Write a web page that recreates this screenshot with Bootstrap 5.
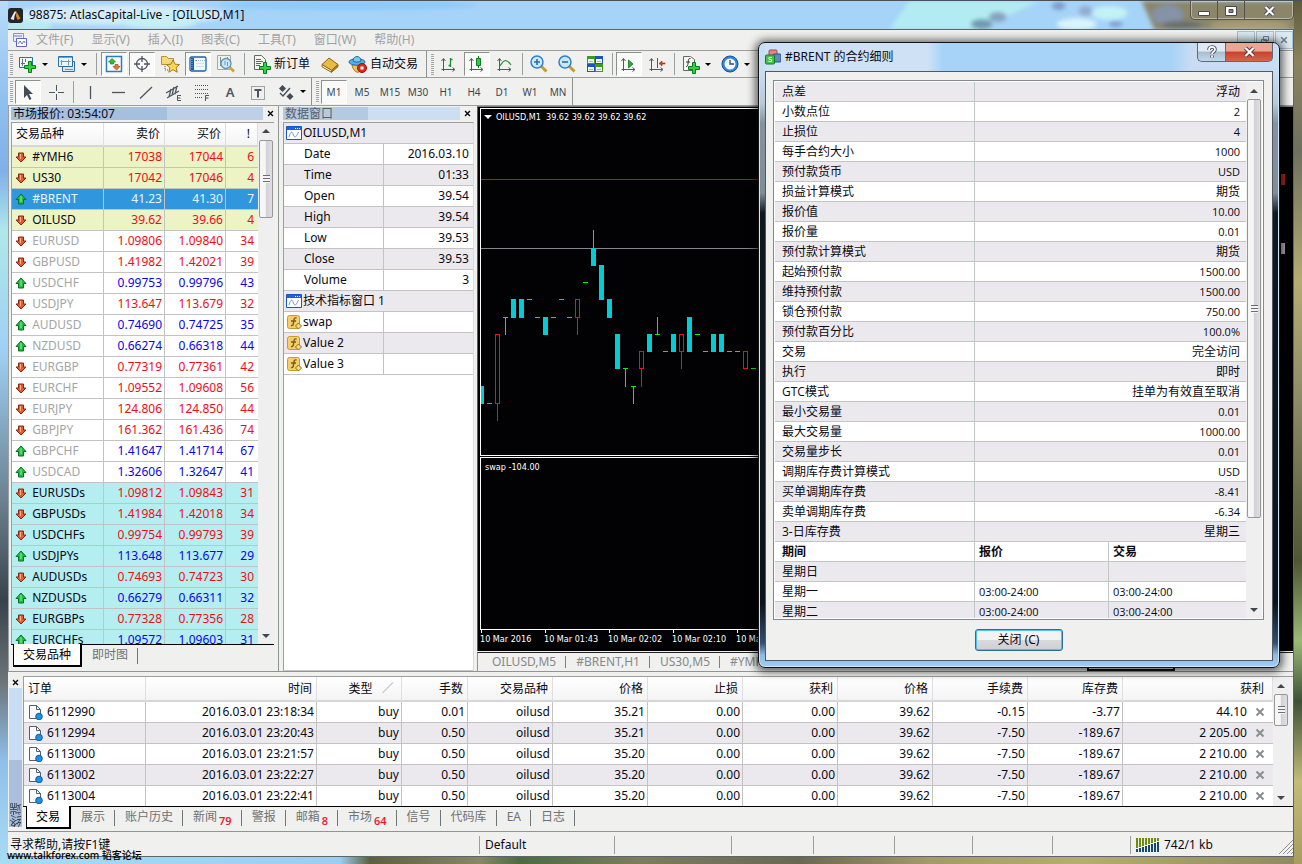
<!DOCTYPE html>
<html lang="zh-CN">
<head>
<meta charset="utf-8">
<meta name="viewport" content="width=device-width, initial-scale=1">
<title>98875: AtlasCapital-Live - [OILUSD,M1]</title>
<link href="https://cdn.jsdelivr.net/npm/bootstrap@5.3.0/dist/css/bootstrap.min.css" rel="stylesheet">
<style>
:root{--face:#f0f0ef;--line:#c3c3c3;--edge:#8f9594;--alt:#ebe9ed}
body{font:12px/16px "Noto Sans","Noto Sans CJK SC",sans-serif;color:#0a0a14;overflow:hidden}
button{font:inherit;color:inherit;background:none;border:0;padding:0}
.app-window{padding:0 8px 7px;border-top:1px solid #4c5058;
 background:
 linear-gradient(#5f5c3c 0,#8b8360 60px,#6f7060 150px,#b5ab74 280px,#8d8a68 400px,#4f5636 560px,#9cb878 640px,#3d5138 700px,#c2bb7a 780px,#a89c60) right/8px 100% no-repeat,
 linear-gradient(#b8dcf8,#8fc0ee 100px,#7fb0e8 170px,#aee8ea 230px,#9fd0f4 350px,#6b8090 500px,#39424c 600px,#6c7478 680px,#90bfea 760px,#a8dcf4) left/8px 100% no-repeat,
 linear-gradient(90deg,#a4dcf6 0,#9ccdf0 340px,#5d6040 370px,#8a8668 480px,#4d6a44 520px,#7d7c62 640px,#6b6852 800px,#a49a6a 930px,#b5ad70 1080px,#8f8960)}
.title-bar{height:28px;background:#a6d3f8}
.title-bar .scene{inset:0;width:100%;height:100%}
.app-name{margin-left:6px}
.client{background:var(--face);border:1px solid #5b6668;border-width:1px 1px 1px 0}
.win-btns{border:1px solid #56544a;border-top:0;border-radius:0 0 5px 5px;height:19px;box-shadow:inset 0 0 0 1px #fff6}
.win-btns button{width:27px;border-right:1px solid #56544a}
.win-btns button:last-child{width:48px;border-right:0}
.menu-row{height:21px;border-bottom:1px solid #9a9f9e}
.menu-row a{padding:0 10px 0 8px;color:#a2a2a2;text-decoration:none}
.mdi-btns button{width:18px;height:18px;border:1px solid #a8bfd0;background:#dbe9f3;margin-left:1px}
.tools-row{height:27px;border-bottom:1px solid #9a9f9e}
.tools-row.low{height:28px}
.grip{width:3px;height:21px;margin:0 1px 0 2px;background:repeating-linear-gradient(#a5a7a7 0 1px,#f0f0ef 1px 2px)}
.row-end + .grip{margin-left:4px}
.tool{width:28px;height:24px;display:flex;align-items:center;justify-content:center;flex:none}
.tool svg{width:20px;height:20px;flex:none}
.tool.on{width:26px;margin:0 1px;border:1px solid #8d9190;border-right-color:#fff;border-bottom-color:#fff;background:#f9f9f8}
.tool.frame{font-size:10px;color:#3c4650}
.tool.letter{font-size:13px;font-weight:600;color:#4c5661}
.wide-tool{display:flex;align-items:center;height:24px}
.wide-tool svg{width:20px;height:20px;margin:0 2px 0 4px}
.wide-tool + .tool{margin-left:6px}
.drop{width:11px;height:24px;display:flex;align-items:center}
.drop::before{content:"";border:3px solid transparent;border-top-color:#000;border-bottom:0}
.sep8,.sep6{width:8px;height:22px;flex:none;background:linear-gradient(#9a9f9e,#9a9f9e) center/1px 100% no-repeat}
.sep6{width:6px}
.row-end{width:1px;align-self:stretch;background:#8d9190}
.pane-head{height:15px;line-height:13px}
.pane-head .cap{height:13px;flex:1;padding-left:2px;background:linear-gradient(90deg,#a5bfdf 62%,#bdd0e8 62%)}
.pane-head .cap.idle{color:#56606c;background:linear-gradient(90deg,#b4cae2 48%,#cbdef2 48%)}
.x-btn{width:14px;height:12px;display:flex;align-items:center;justify-content:center}
.grid-table{border-collapse:separate;border-spacing:0;table-layout:fixed;width:100%;line-height:20px;white-space:nowrap}
.grid-table td{height:21px;padding:0 2px 0 0;background:#fff;border-bottom:1px solid var(--line);border-right:1px solid var(--line);overflow:hidden}
.grid-table td:last-child{border-right:0}
.grid-table th{height:25px;font-weight:400;padding:0 4px 0 0;background:linear-gradient(#fff,#f4f4f5);border-right:1px solid #dedfe2;border-bottom:2px solid #d6d6d8}
.grid-table svg{width:16px;height:16px;vertical-align:-4px}
.watch{width:270px;padding:1px 1px 4px 2px;border-left:1px solid #9aa09f}
.watch-frame{border-top:1px solid #9a9f9e;border-left:1px solid #9a9f9e}
.watch-frame,.watch .tab-strip{margin-right:3px}
.watch .tab-strip{padding-left:2px}
.watch .grid-table th{height:24px}
.watch td:first-child{padding-left:1px}
.watch td:last-child{padding-right:4px}
.watch th:last-child{padding-right:7px}
.watch .hot td{background:#ecf3c4}
.watch .picked td{background:#3096de;color:#e9f6ff}
.watch .minor td{background:#b4eef0}
.faint{color:#a4a6a6}
.up-num{color:#0a04ee}.down-num{color:#f00c16}
.picked .up-num{color:#e9f6ff}
.data-pane{width:196px;padding:1px 0 0 4px;border-left:1px solid #8f9594}
.data-frame{border:1px solid #9a9f9e;border-right-color:#dcdcdc;border-bottom-color:#c8c8c8;background:#fff}
.data-frame td{padding-right:4px}
.data-frame tr:nth-child(odd) td,.orders tbody tr:nth-child(even) td{background:var(--alt)}
.data-frame .name-cell{padding-left:20px}
.data-frame .icon-cell{padding-left:2px}
.data-frame svg{margin-right:1px}
.scroller{width:16px;background:#efefef;display:flex;flex-direction:column;align-items:center;flex:none}
.scroller i{height:17px;display:flex;align-items:center;flex:none}
.scroller i::before{content:"";border:4px solid transparent;border-bottom-color:#40484c;border-top:0}
.scroller i:last-child::before{border:4px solid transparent;border-top-color:#40484c;border-bottom:0}
.thumb{width:14px;border:1px solid #979797;border-radius:2px;background:linear-gradient(90deg,#f6f6f6 45%,#d0d0d6 50%,#dfdfe3);display:flex;align-items:center;justify-content:center}
.thumb::after{content:"";width:7px;height:8px;background:repeating-linear-gradient(#6a6e72 0 1px,#f4f4f4 1px 3px)}
.tab-strip{border-top:1px solid #000;color:#6f7272;height:23px}
.tab-strip button{padding:0 10px;position:relative;height:20px;line-height:20px}
.tab-strip button:not(.current)::after{content:"";position:absolute;right:0;top:3px;bottom:1px;width:1px;background:#6f7678}
.tab-strip .current{background:#fff;color:#000;border:solid #000;border-width:0 2px 2px 1px;height:23px;margin-top:-1px;padding:0 9px}
.tab-strip sub{color:#f01c30;font-weight:600;font-size:11px;bottom:-4px;line-height:10px;margin-left:2px}
.chart{background:#020204;padding:1px 46px 0 2px;border-left:1px solid #555c5c;border-top:1px solid #777c7c;color:#fff;font:9px/12px "DejaVu Sans Condensed","DejaVu Sans",sans-serif}
.pane-a{border:1px solid #fff;border-right:0;margin-bottom:1px}
.pane-b{border:1px solid #fff;border-right:0;height:173px;padding:3px 0 0 4px}
.pane-a svg{width:100%;height:100%;display:block;overflow:visible}
.axis{height:21px}
.axis span{width:64px;flex:none;position:relative;padding-top:3px;white-space:nowrap}
.axis span::before{content:"";position:absolute;left:1px;top:0;height:3px;width:1px;background:#fff}
.chart-tabs{height:19px;border-top:1px solid #222;margin-top:1px;color:#858888;border-left:1px solid #8f9594}
.chart-tabs button{padding:0 10px;line-height:18px;position:relative}
.chart-tabs button::after{content:"";position:absolute;right:0;top:3px;bottom:3px;width:1px;background:#7b8082}
.active-edge{width:88px;height:18px;border:solid #111;border-width:0 2px 2px;margin-right:118px;background:#fff}
.bottom-pane{height:161px;border-top:1px solid #8f9594;border-bottom:1px solid #8f9594;padding-top:4px}
.side-strip{width:15px;padding-right:1px}
.side-cap{width:13px;background:linear-gradient(#a9bfdc 48%,#c8def5 48%);writing-mode:vertical-rl;transform:rotate(180deg);line-height:13px;color:#333c48;font-family:"Noto Sans CJK SC",sans-serif}
.orders-frame{border-top:1px solid #9a9f9e;border-left:1px solid #9a9f9e;height:130px;padding-right:4px}
.orders td:first-child{padding-left:3px}
.orders td:first-child svg{margin-right:4px}
.orders .kill{width:10px;height:10px;vertical-align:-1px;margin-left:5px;color:#8b8e90}
.status-row{height:24px;line-height:25px}
.status-row .hint{padding-left:2px}
.status-row .cellbox{border-left:1px solid #9a9f9e;height:18px;margin-top:4px;line-height:18px;padding-left:5px;flex:none}
.watermark{left:7px;bottom:2px;font:500 10px/14px "Noto Sans","Noto Sans CJK SC",sans-serif;color:#000}
.spec-dialog{right:22px;top:41px;width:522px;height:626px;border:1px solid #101418;border-radius:7px;padding:0 6px 6px;
 box-shadow:inset 0 0 0 1px #cfe6f8,0 1px 9px 3px #0009;
 background:linear-gradient(#c9def3 0,#c9def3 28px,#b9cbd8 60px,#8593a0 80px,#7f8d99 150px,#10181e 170px,#0c1319 560px,#34506e 600px,#8fb9e4 612px,#a2cdf4)}
.spec-title{height:28px;background:linear-gradient(90deg,#cfe1f4 0 16%,#cfe1f4 32%,#a7d3f8 35% 80%,#c8dcf3 84%)}
.help-btn,.shut-btn{height:19px;border:1px solid #5c6a78;border-top:0;background:linear-gradient(#dfe9f3 45%,#a9bdd2 50%,#c3d8ea)}
.help-btn{width:28px;border-radius:0 0 0 5px;border-right:0}
.shut-btn{width:48px;border-radius:0 0 5px 0;background:linear-gradient(#e9a596 45%,#c8412e 50%,#d4664c)}
.spec-body{background:var(--face);border:1px solid #4d5a64;padding:8px 8px 9px 7px}
.spec-list{border:1px solid #828a90;height:540px;background:#fff;padding:1px;font:11px/19px "Open Sans","Noto Sans CJK SC",sans-serif}
.spec-list table{line-height:19px}
.spec-list td{height:20px;padding:0 6px 0 7px;border-color:#c3c6c6}
.spec-list td ~ td{padding-left:4px}
.spec-list tr:nth-child(odd) td{background:var(--alt)}
.spec-list .han{font-size:12px}
.ok-btn{width:88px;height:22px;margin-top:9px;border:1px solid #2d6c9c;border-radius:3px;box-shadow:inset 0 0 0 1px #4dc2f2;background:linear-gradient(#f3f3f3 48%,#dadadc 50%,#cfcfd4)}
</style>
</head>
<body>
<svg width="0" height="0" class="position-absolute" aria-hidden="true">
 <symbol id="i-up" viewBox="0 0 16 16"><path d="M8 3l5 5.500h-2.500v4.500h-5V8.500H3z" fill="#1fbf3c" stroke="#0b6e2a"/><path d="M8 5v6" stroke="#8af29a"/></symbol>
 <symbol id="i-down" viewBox="0 0 16 16"><path d="M8 13l5-5h-2.500V4h-5v4H3z" fill="#f0552c" stroke="#7e2a14"/><path d="M7.500 5v5" stroke="#ffb38a"/></symbol>
 <symbol id="i-win" viewBox="0 0 16 16"><path d="M.5 1.500h15v13H.5z" fill="#fff" stroke="#1a52c8"/><path d="M1 2h14v3H1z" fill="#1f5fe0"/><path d="M9 3.500h1m1 0h1m1 0h1" stroke="#fff"/><path d="M3 12c2-6 3-6 4.500-2s2.500 2 5-3" fill="none" stroke="#6f94e0"/></symbol>
 <symbol id="i-fx" viewBox="0 0 16 16"><rect x="1.500" y="1.500" width="12" height="13" rx="2" fill="#f2cf6a" stroke="#c79a2c"/><path d="M10.500 4c-2-.5-2.500.5-2.800 3.500S7 12 5 11.500M5 7h5" fill="none" stroke="#7c5a14" stroke-width="1.400"/><path d="M12.500 9l3 3-3 3-3-3z" fill="#f8dc80" stroke="#8b6a1e"/></symbol>
 <symbol id="i-doc" viewBox="0 0 16 16"><path d="M2.500 1.500h7l4 4v9h-11z" fill="#fafafa" stroke="#55606a"/><path d="M9.500 1.500v4h4" fill="none" stroke="#55606a"/><circle cx="12" cy="12.500" r="3.300" fill="#1e90e8" stroke="#0c5ca4"/></symbol>
 <symbol id="i-x" viewBox="0 0 10 10"><path d="M1.500 1.500l7 7m0-7l-7 7" stroke="currentColor" stroke-width="2"/></symbol>
 <symbol id="i-newchart" viewBox="0 0 20 20"><path d="M1.500 3.500h13v10h-13z" fill="#eef6fc" stroke="#2b6f9f"/><path d="M4.500 5v7M3 9.500h4M7.500 5v3" stroke="#58707f" fill="none"/><path d="M10.500 7.500h3v4h4v3h-4v4h-3v-4h-4v-3h4z" fill="#31d23f" stroke="#0b7d20"/></symbol>
 <symbol id="i-windows" viewBox="0 0 20 20"><path d="M5.500 7.500h12v10h-12z" fill="#d5e6f5" stroke="#2b6fa9"/><path d="M1.500 2.500h14v10h-14z" fill="#eaf4fb" stroke="#2b6fa9"/><path d="M2 3h13v1H2z" fill="#64a5d8"/><path d="M4.500 6v5m-1-3.500h10m-2-2v6M8 15.500h8" stroke="#7d95a5"/></symbol>
 <symbol id="i-quotes" viewBox="0 0 20 20"><path d="M2.500 2.500h15v15h-15z" fill="#f8fcff" stroke="#2d7cc0" stroke-width="1.500"/><path d="M8 4.500l3.500 3.500H9.500v2h-3V8h-2z" fill="#2cc52c" stroke="#0b7d20" stroke-width=".7"/><path d="M12.500 16L16 12.500h-2v-2h-3v2H9z" fill="#f4762c" stroke="#b03c0c" stroke-width=".7"/></symbol>
 <symbol id="i-aim" viewBox="0 0 20 20"><circle cx="10" cy="10" r="5.500" fill="none" stroke="#4c5661" stroke-width="1.300"/><path d="M10 2v6m0 4v6M2 10h6m4 0h6" stroke="#4c5661" stroke-width="1.300"/></symbol>
 <symbol id="i-star" viewBox="0 0 20 20"><path d="M1.500 2.500h5l2 2h5v6h-12z" fill="#f5d878" stroke="#bb912c"/><path d="M5 12v4h3" stroke="#6b5a20" fill="none" stroke-dasharray="1 1"/><path d="M13 6l2 4.200 4.500.4-3.400 3 1.100 4.600-4.200-2.500-4.200 2.500 1.100-4.600-3.400-3 4.500-.4z" fill="#fbd75a" stroke="#a97c18"/></symbol>
 <symbol id="i-nav" viewBox="0 0 20 20"><rect x="2" y="3" width="16" height="14" rx="1.500" fill="#f2f7fc" stroke="#1b62ab" stroke-width="1.300"/><path d="M3 4h3v12H3z" fill="#1d5c9c"/><path d="M4 5v10M8 6.500h9" stroke="#8db9df" stroke-dasharray="1 1"/><path d="M8 9.500h8M8 12.500h8" stroke="#d0e0f0"/><path d="M7.500 6.500h1" stroke="#d22"/></symbol>
 <symbol id="i-tester" viewBox="0 0 20 20"><path d="M1.500 1.500h13v14h-13z" fill="#f3f2e8" stroke="#a7a99c"/><path d="M4.500 3v9m7-9v3" stroke="#7c8b92"/><circle cx="10" cy="9.500" r="5" fill="#c9e5f8" stroke="#5d93bd" stroke-width="1.300"/><path d="M9 7v4m2.500-3v4" stroke="#6f9ab5"/><path d="M14 13.500l4 4" stroke="#d3a02c" stroke-width="2.500"/></symbol>
 <symbol id="i-order" viewBox="0 0 20 20"><path d="M2.500 1.500h7l4 4v10h-11z" fill="#f6f6ee" stroke="#646a62"/><path d="M4 5.500h5m-5 2h7m-7 2h5m-5 2h4" stroke="#5f6a66"/><path d="M11.500 8.500h3v4h4v3h-4v4h-3v-4h-4v-3h4z" fill="#31d23f" stroke="#0b7d20"/></symbol>
 <symbol id="i-book" viewBox="0 0 20 20"><path d="M2 10.500L9 4l9 6.500-6.500 6z" fill="#eabb44" stroke="#8f6612"/><path d="M2 10.500v2.300l9.500 5.500v-2z" fill="#fff0bb" stroke="#8f6612"/><path d="M11.500 16.500L18 10.500v2.200l-6.500 5.600z" fill="#b7821b" stroke="#8f6612"/></symbol>
 <symbol id="i-auto" viewBox="0 0 20 20"><path d="M4 11l8-1 4 3-5 5c-3 1-6-2-7-7z" fill="#f0c650" stroke="#a2781e"/><ellipse cx="9" cy="8" rx="8" ry="3.300" fill="#58aee6" stroke="#2169a4"/><path d="M5 7c0-6 8-6 8 0-2 1.500-6 1.500-8 0z" fill="#7cc6f2" stroke="#2169a4"/><circle cx="14" cy="14" r="4.500" fill="#e02818" stroke="#98130a"/><path d="M12.500 12.500h3v3h-3z" fill="#fff"/></symbol>
 <symbol id="i-axes" viewBox="0 0 20 20"><path d="M4.500 17V5m-2 2l2-2.500 2 2.500M2.500 15.500h13m-2-2l2.500 2-2.500 2" fill="none" stroke="#4f5963"/></symbol>
 <symbol id="i-bars" viewBox="0 0 20 20"><use href="#i-axes"/><path d="M11.500 4v9m0-7.500h2m-4 6h2" stroke="#1d8c2b" stroke-width="1.300"/></symbol>
 <symbol id="i-candle" viewBox="0 0 20 20"><use href="#i-axes"/><path d="M11.500 2v12" stroke="#0e7c20"/><path d="M9.500 4.500h4v7h-4z" fill="#2fca45" stroke="#0e7c20"/></symbol>
 <symbol id="i-line" viewBox="0 0 20 20"><use href="#i-axes"/><path d="M5 12c4-7 7-7 11-1" fill="none" stroke="#2d9a3a" stroke-width="1.300"/></symbol>
 <symbol id="i-zin" viewBox="0 0 20 20"><path d="M12 12l5.500 5.500" stroke="#c99a2c" stroke-width="3"/><circle cx="8" cy="8" r="6" fill="#c9e8fb" stroke="#2f83c4" stroke-width="1.500"/><path d="M5 8h6M8 5v6" stroke="#2a6da8" stroke-width="1.600"/></symbol>
 <symbol id="i-zout" viewBox="0 0 20 20"><path d="M12 12l5.500 5.500" stroke="#c99a2c" stroke-width="3"/><circle cx="8" cy="8" r="6" fill="#c9e8fb" stroke="#2f83c4" stroke-width="1.500"/><path d="M5 8h6" stroke="#2a6da8" stroke-width="1.600"/></symbol>
 <symbol id="i-tiles" viewBox="0 0 20 20"><path d="M2 2h8v8H2zM10 10h8v8h-8z" fill="#3c9a1c"/><path d="M10 2h8v8h-8zM2 10h8v8H2z" fill="#1a55c4"/><path d="M3 5h6v4H3zM11 5h6v4h-6zM3 13h6v4H3zM11 13h6v4h-6z" fill="#f4f8f4"/><path d="M4 7.500h4m4 0h4M4 15.500h4m4 0h4" stroke="#9fb8cc"/></symbol>
 <symbol id="i-scroll" viewBox="0 0 20 20"><use href="#i-axes"/><path d="M9.500 6l4.500 4-4.500 4z" fill="#2bab3a" stroke="#0e7c20" stroke-width=".8"/></symbol>
 <symbol id="i-shift" viewBox="0 0 20 20"><use href="#i-axes"/><path d="M10.500 4v10" stroke="#4f5963"/><path d="M12 9.500l3-2.500v2h3v1h-3v2z" fill="#d83c14" stroke="#a82a0c" stroke-width=".6"/></symbol>
 <symbol id="i-indi" viewBox="0 0 20 20"><path d="M2.500 2.500h7l4 3v11h-11z" fill="#f8f8f2" stroke="#646a62"/><path d="M9.500 4.500c-2-.5-2 1-2.300 4S6 13 5 12.500M5 8h4" fill="none" stroke="#333"/><path d="M11.500 8.500h3v4h4v3h-4v4h-3v-4h-4v-3h4z" fill="#31d23f" stroke="#0b7d20"/></symbol>
 <symbol id="i-clock" viewBox="0 0 20 20"><circle cx="10" cy="10" r="8" fill="#2f86dc" stroke="#154f94"/><circle cx="10" cy="10" r="5.500" fill="#f2f9ff"/><path d="M10 6v4h4" fill="none" stroke="#33495e" stroke-width="1.300"/></symbol>
 <symbol id="i-cursor" viewBox="0 0 20 20"><path d="M6 3v13l3-3 2.500 5 2-1-2.500-5h4z" fill="#434c57"/></symbol>
 <symbol id="i-cross" viewBox="0 0 20 20"><path d="M10.500 3v6m0 3v6M3 10.500h6m3 0h6" stroke="#4c5661"/></symbol>
 <symbol id="i-vline" viewBox="0 0 20 20"><path d="M10.500 4v13" stroke="#4c5661" stroke-width="1.300"/></symbol>
 <symbol id="i-hline" viewBox="0 0 20 20"><path d="M4 10.500h13" stroke="#4c5661" stroke-width="1.300"/></symbol>
 <symbol id="i-diag" viewBox="0 0 20 20"><path d="M4 16.500L16 5" stroke="#4c5661" stroke-width="1.300"/></symbol>
 <symbol id="i-chan" viewBox="0 0 20 20"><path d="M2 11L14 4M3 16l12-7M5 15l2-8M8 13l2-8m1 7l2-8" stroke="#4c5661" stroke-width="1.300"/><path d="M17 13.500h-3.500v5H17m-3.500-2.500h3" fill="none" stroke="#4c5661"/></symbol>
 <symbol id="i-fib" viewBox="0 0 20 20"><path d="M3 3.500h14M3 7.500h14M3 11.500h14M3 15.500h8" stroke="#4c5661" stroke-dasharray="1 1"/><path d="M17 13.500h-3.500V19m0-3h3" fill="none" stroke="#4c5661"/></symbol>
 <symbol id="i-box" viewBox="0 0 20 20"><path d="M3.500 4.500h13v13h-13z" fill="none" stroke="#4c5661" stroke-dasharray="1 1"/><path d="M6.500 8h7m-3.500 0v7.500" stroke="#4c5661" stroke-width="2"/></symbol>
 <symbol id="i-shapes" viewBox="0 0 20 20"><path d="M6.500 3l3.500 3.500L6.500 10 3 6.500z" fill="#434c57"/><path d="M14 11l3.500 3.500L14 18l-3.500-3.500z" fill="#434c57"/><path d="M4 11l3 3 7-8" fill="none" stroke="#434c57" stroke-width="1.300"/></symbol>
</svg>

<div class="app-window vh-100 d-flex flex-column position-relative">
 <header class="title-bar d-flex align-items-center position-relative flex-shrink-0">
  <svg class="scene position-absolute" aria-hidden="true">
   <defs><filter id="soft" x="-10%" y="-50%" width="120%" height="200%"><feGaussianBlur stdDeviation="2"/></filter></defs>
   <g filter="url(#soft)"><ellipse cx="110" cy="14" rx="110" ry="10" fill="#d3ecf8"/><ellipse cx="20" cy="25" rx="24" ry="6" fill="#b9eaf0"/><ellipse cx="150" cy="20" rx="40" ry="8" fill="#c8eef4"/><ellipse cx="340" cy="4" rx="130" ry="5" fill="#8dcafa"/></g>
   <svg x="67%" overflow="visible"><g filter="url(#soft)"><path d="M20 28l20-28h130l-60 28z" fill="#b2ecf2"/><ellipse cx="112" cy="23" rx="11" ry="5" fill="#6f9aae"/><ellipse cx="128" cy="16" rx="9" ry="5" fill="#87a2bf"/><ellipse cx="189" cy="5" rx="7" ry="4" fill="#7e9ccf"/><ellipse cx="207" cy="23" rx="20" ry="6" fill="#d9f4fc"/><ellipse cx="240" cy="12" rx="18" ry="7" fill="#c3f2f6"/><ellipse cx="216" cy="10" rx="7" ry="5" fill="#93abd0"/><ellipse cx="246" cy="23" rx="7" ry="3" fill="#7e9ccf"/><path d="M272 0h180v29H285z" fill="#8b866a"/><ellipse cx="298" cy="14" rx="16" ry="10" fill="#8493a6"/><ellipse cx="312" cy="24" rx="20" ry="4" fill="#6c6e6a"/><ellipse cx="380" cy="24" rx="40" ry="5" fill="#a79c70"/></g></svg>
  </svg>
  <svg class="position-relative" width="15" height="15" viewBox="0 0 15 15" aria-hidden="true"><rect width="15" height="15" rx="3" fill="#23252a"/><path d="M2.500 11l4-7.500h2L6.500 8 6 12z" fill="#e8ecf0"/><path d="M8.500 3.500l4 7-3 1.500L8 8z" fill="#e08420"/></svg>
  <span class="app-name position-relative">98875: AtlasCapital-Live - [OILUSD,M1]</span>
  <div class="win-btns d-flex ms-auto align-self-start position-relative">
   <button aria-label="最小化"><svg width="14" height="12"><path d="M1.500 6.500h11v4h-11z" fill="#fff" stroke="#444b58"/></svg></button>
   <button aria-label="最大化"><svg width="14" height="12"><path d="M1.500 1.500h11v9h-11z" fill="#fff" stroke="#444b58"/><path d="M5 4.500h4v3H5z" fill="#8b866a" stroke="#444b58"/></svg></button>
   <button aria-label="关闭窗口"><svg width="13" height="12"><path d="M2.500 2l8 8m0-8l-8 8" stroke="#444b58" stroke-width="4"/><path d="M2.500 2l8 8m0-8l-8 8" stroke="#fff" stroke-width="2.200"/></svg></button>
  </div>
 </header>

 <div class="client flex-grow-1 d-flex flex-column" style="min-height:0">
  <nav class="menu-row d-flex align-items-center flex-shrink-0">
   <svg width="16" height="16" viewBox="0 0 16 16" class="ms-1" aria-hidden="true"><path d="M1.500 1.500h10v8h-10z" fill="#eef" stroke="#8a90d4"/><path d="M4.500 6.500h10v8h-10z" fill="#fff" stroke="#5c66c8"/><path d="M6 12l2-3 2 3 2-3 1 2M2 4h8" fill="none" stroke="#6f78d0"/></svg>
   <a href="#">文件(F)</a><a href="#">显示(V)</a><a href="#">插入(I)</a><a href="#">图表(C)</a><a href="#">工具(T)</a><a href="#">窗口(W)</a><a href="#">帮助(H)</a>
   <div class="mdi-btns d-flex ms-auto"><button aria-label="缩小"></button><button aria-label="还原"><svg width="10" height="10" class="d-block mx-auto"><path d="M3.500 1.500h5v4h-5zM1.500 4.500h5v4h-5z" fill="none" stroke="#6f8496"/></svg></button><button aria-label="关闭图表"><svg width="8" height="8" class="d-block mx-auto" color="#71818e"><use href="#i-x"/></svg></button></div>
  </nav>

  <div class="tools-row d-flex align-items-center flex-shrink-0">
   <div class="grip"></div>
   <button class="tool" aria-label="新图表"><svg><use href="#i-newchart"/></svg></button><button class="drop" aria-label="新图表选项"></button>
   <button class="tool" aria-label="配置"><svg><use href="#i-windows"/></svg></button><button class="drop" aria-label="配置选项"></button>
   <div class="sep8"></div>
   <button class="tool on" aria-label="市场报价"><svg><use href="#i-quotes"/></svg></button>
   <button class="tool on" aria-label="数据窗口"><svg><use href="#i-aim"/></svg></button>
   <button class="tool" aria-label="导航"><svg><use href="#i-star"/></svg></button>
   <button class="tool on" aria-label="终端"><svg><use href="#i-nav"/></svg></button>
   <button class="tool" aria-label="策略测试"><svg><use href="#i-tester"/></svg></button>
   <div class="sep8"></div>
   <button class="wide-tool"><svg><use href="#i-order"/></svg>新订单</button>
   <button class="tool" aria-label="编辑器"><svg><use href="#i-book"/></svg></button>
   <button class="wide-tool"><svg><use href="#i-auto"/></svg>自动交易</button>
   <div class="row-end ms-2"></div>
   <div class="grip"></div>
   <button class="tool" aria-label="柱状图"><svg><use href="#i-bars"/></svg></button>
   <button class="tool on" aria-label="蜡烛图"><svg><use href="#i-candle"/></svg></button>
   <button class="tool" aria-label="折线图"><svg><use href="#i-line"/></svg></button>
   <div class="sep6"></div>
   <button class="tool" aria-label="放大"><svg><use href="#i-zin"/></svg></button>
   <button class="tool" aria-label="缩小图表"><svg><use href="#i-zout"/></svg></button>
   <button class="tool" aria-label="平铺"><svg><use href="#i-tiles"/></svg></button>
   <div class="sep6"></div>
   <button class="tool on" aria-label="自动滚动"><svg><use href="#i-scroll"/></svg></button>
   <button class="tool" aria-label="图表平移"><svg><use href="#i-shift"/></svg></button>
   <div class="sep6"></div>
   <button class="tool" aria-label="指标"><svg><use href="#i-indi"/></svg></button><button class="drop" aria-label="指标选项"></button>
   <button class="tool" aria-label="周期"><svg><use href="#i-clock"/></svg></button><button class="drop" aria-label="周期选项"></button>
  </div>

  <div class="tools-row low d-flex align-items-center flex-shrink-0">
   <div class="grip"></div>
   <button class="tool on" aria-label="光标"><svg><use href="#i-cursor"/></svg></button>
   <button class="tool" aria-label="十字线"><svg><use href="#i-cross"/></svg></button>
   <div class="sep6"></div>
   <button class="tool" aria-label="垂直线"><svg><use href="#i-vline"/></svg></button>
   <button class="tool" aria-label="水平线"><svg><use href="#i-hline"/></svg></button>
   <button class="tool" aria-label="趋势线"><svg><use href="#i-diag"/></svg></button>
   <button class="tool" aria-label="通道"><svg><use href="#i-chan"/></svg></button>
   <button class="tool" aria-label="斐波那契"><svg><use href="#i-fib"/></svg></button>
   <button class="tool letter">A</button>
   <button class="tool" aria-label="标签"><svg><use href="#i-box"/></svg></button>
   <button class="tool" aria-label="箭头"><svg><use href="#i-shapes"/></svg></button><button class="drop" aria-label="箭头选项"></button>
   <div class="row-end"></div>
   <div class="grip"></div>
   <button class="tool frame on">M1</button><button class="tool frame">M5</button><button class="tool frame">M15</button><button class="tool frame">M30</button><button class="tool frame">H1</button><button class="tool frame">H4</button><button class="tool frame">D1</button><button class="tool frame">W1</button><button class="tool frame">MN</button>
   <div class="row-end"></div>
  </div>

  <main class="d-flex flex-grow-1" style="min-height:0">
   <section class="watch d-flex flex-column flex-shrink-0">
    <div class="pane-head d-flex"><div class="cap">市场报价: 03:54:07</div><button class="x-btn" aria-label="关闭报价"><svg width="7" height="7"><use href="#i-x"/></svg></button></div>
    <div class="watch-frame d-flex flex-grow-1 overflow-hidden">
     <div class="flex-grow-1 overflow-hidden">
      <table class="grid-table"><colgroup><col style="width:92px"><col style="width:61px"><col style="width:61px"><col></colgroup>
       <thead><tr><th class="ps-1">交易品种</th><th class="text-end">卖价</th><th class="text-end">买价</th><th class="text-end">!</th></tr></thead>
       <tbody id="quotes"></tbody></table>
     </div>
     <div class="scroller"><i></i><div class="thumb" style="height:78px"></div><i class="mt-auto"></i></div>
    </div>
    <div class="tab-strip d-flex"><button class="current">交易品种</button><button>即时图</button></div>
   </section>

   <section class="data-pane d-flex flex-column flex-shrink-0">
    <div class="pane-head d-flex"><div class="cap idle">数据窗口</div><button class="x-btn" aria-label="关闭数据窗口"><svg width="7" height="7"><use href="#i-x"/></svg></button></div>
    <div class="data-frame flex-grow-1 overflow-hidden">
     <table class="grid-table"><colgroup><col style="width:100px"><col></colgroup><tbody>
      <tr><td colspan="2" class="icon-cell"><svg><use href="#i-win"/></svg><span>OILUSD,M1</span></td></tr>
      <tr><td class="name-cell">Date</td><td class="text-end">2016.03.10</td></tr>
      <tr><td class="name-cell">Time</td><td class="text-end">01:33</td></tr>
      <tr><td class="name-cell">Open</td><td class="text-end">39.54</td></tr>
      <tr><td class="name-cell">High</td><td class="text-end">39.54</td></tr>
      <tr><td class="name-cell">Low</td><td class="text-end">39.53</td></tr>
      <tr><td class="name-cell">Close</td><td class="text-end">39.53</td></tr>
      <tr><td class="name-cell">Volume</td><td class="text-end">3</td></tr>
      <tr><td colspan="2" class="icon-cell"><svg><use href="#i-win"/></svg><span>技术指标窗口 1</span></td></tr>
      <tr><td class="icon-cell"><svg><use href="#i-fx"/></svg><span>swap</span></td><td></td></tr>
      <tr><td class="icon-cell"><svg><use href="#i-fx"/></svg><span>Value 2</span></td><td></td></tr>
      <tr><td class="icon-cell"><svg><use href="#i-fx"/></svg><span>Value 3</span></td><td></td></tr>
     </tbody></table>
    </div>
   </section>

   <section class="flex-grow-1 d-flex flex-column" style="min-width:0;margin-left:3px">
    <div class="chart flex-grow-1 d-flex flex-column" style="min-height:0">
     <div class="pane-a flex-grow-1" style="min-height:0"><svg id="plot" role="img" aria-label="OILUSD M1"></svg></div>
     <div class="pane-b">swap -104.00</div>
     <div class="axis d-flex overflow-hidden"><span>10 Mar 2016</span><span>10 Mar 01:43</span><span>10 Mar 02:02</span><span>10 Mar 02:10</span><span>10 Mar 02:18</span></div>
    </div>
    <div class="chart-tabs d-flex flex-shrink-0 ps-1"><button>OILUSD,M5</button><button>#BRENT,H1</button><button>US30,M5</button><button>#YMH6,M5</button><div class="active-edge ms-auto"></div></div>
   </section>
  </main>

  <section class="bottom-pane d-flex flex-shrink-0">
   <div class="side-strip d-flex flex-column align-items-center flex-shrink-0"><button class="x-btn" aria-label="关闭终端"><svg width="7" height="7"><use href="#i-x"/></svg></button><div class="side-cap flex-grow-1 mb-1">终端</div></div>
   <div class="flex-grow-1 d-flex flex-column" style="min-width:0">
    <div class="orders-frame d-flex overflow-hidden">
     <div class="flex-grow-1 overflow-hidden">
      <table class="grid-table orders"><colgroup><col style="width:122px"><col style="width:171px"><col style="width:85px"><col style="width:66px"><col style="width:85px"><col style="width:95px"><col style="width:95px"><col style="width:95px"><col style="width:95px"><col style="width:95px"><col style="width:95px"><col></colgroup>
       <thead><tr class="text-end"><th class="text-start ps-1">订单</th><th>时间</th><th>类型 &nbsp; <span class="faint">∕</span>&nbsp;</th><th>手数</th><th>交易品种</th><th>价格</th><th>止损</th><th>获利</th><th>价格</th><th>手续费</th><th>库存费</th><th class="pe-2">获利</th></tr></thead>
       <tbody id="orders"></tbody></table>
     </div>
     <div class="scroller"><i></i><div class="thumb" style="height:32px"></div><i class="mt-auto"></i></div>
    </div>
    <div class="tab-strip d-flex" style="padding-left:3px"><button class="current">交易</button><button>展示</button><button>账户历史</button><button>新闻<sub>79</sub></button><button>警报</button><button>邮箱<sub>8</sub></button><button>市场<sub>64</sub></button><button>信号</button><button>代码库</button><button>EA</button><button>日志</button></div>
   </div>
  </section>

  <footer class="status-row d-flex flex-shrink-0">
   <div class="hint flex-grow-1">寻求帮助,请按F1键</div>
   <div class="cellbox" style="width:135px">Default</div><div class="cellbox" style="width:117px"></div><div class="cellbox" style="width:82px"></div><div class="cellbox" style="width:81px"></div><div class="cellbox" style="width:78px"></div><div class="cellbox" style="width:80px"></div><div class="cellbox" style="width:78px"></div>
   <div class="cellbox d-flex align-items-center" style="width:163px"><svg id="signal" width="24" height="14" class="me-1" aria-hidden="true"></svg>742/1 kb
    <svg width="15" height="15" class="ms-auto align-self-end" aria-hidden="true"><path d="M1 15L15 1M5 15L15 5M9 15l6-6M13 15l2-2" stroke="#8c9090"/></svg></div>
  </footer>
 </div>

 <div class="watermark position-absolute">www.talkforex.com 韬客论坛</div>

 <div class="spec-dialog position-absolute d-flex flex-column" role="dialog" aria-labelledby="spec-name">
  <div class="spec-title d-flex align-items-center mt-0 flex-shrink-0">
   <svg width="16" height="16" viewBox="0 0 16 16" aria-hidden="true"><rect x="4" y="1" width="8" height="7" rx="1" fill="#e0888c" stroke="#a8444c"/><rect x="8" y="5" width="8" height="8" rx="1" fill="#5a88c8" stroke="#2c4f8c"/><rect x=".5" y="6" width="9" height="9" rx="1" fill="#48c050" stroke="#187828"/><path d="M7 8.500H4v2h2.500v2H3.500" fill="none" stroke="#e8ffe8"/></svg>
   <span id="spec-name" class="ms-1">#BRENT 的合约细则</span>
   <button class="help-btn ms-auto align-self-start" aria-label="帮助"><svg width="12" height="14" class="d-block mx-auto"><path d="M3 5c0-4 6-4 6-.5C9 7 6 6.500 6 9m0 1.500v2" fill="none" stroke="#47525e" stroke-width="3.600"/><path d="M3 5c0-4 6-4 6-.5C9 7 6 6.500 6 9m0 1.500v2" fill="none" stroke="#fff" stroke-width="1.800"/></svg></button>
   <button class="shut-btn align-self-start" aria-label="关闭对话框"><svg width="13" height="12" class="d-block mx-auto"><path d="M2.500 2l8 8m0-8l-8 8" stroke="#5e3430" stroke-width="4"/><path d="M2.500 2l8 8m0-8l-8 8" stroke="#fff" stroke-width="2.200"/></svg></button>
  </div>
  <div class="spec-body flex-grow-1 d-flex flex-column align-items-center">
   <div class="spec-list d-flex w-100 overflow-hidden">
    <div class="flex-grow-1 overflow-hidden"><table class="grid-table"><colgroup><col style="width:200px"><col style="width:134px"><col></colgroup><tbody id="specs"></tbody></table></div>
    <div class="scroller"><i></i><div class="thumb" style="height:419px"></div><i class="mt-auto"></i></div>
   </div>
   <button class="ok-btn">关闭 (C)</button>
  </div>
 </div>
</div>

<script>
const quotes = `#YMH6 17038 17044 6 d hot
US30 17042 17046 4 d hot
#BRENT 41.23 41.30 7 u picked
OILUSD 39.62 39.66 4 d hot
EURUSD 1.09806 1.09840 34 d
GBPUSD 1.41982 1.42021 39 d
USDCHF 0.99753 0.99796 43 u
USDJPY 113.647 113.679 32 d
AUDUSD 0.74690 0.74725 35 u
NZDUSD 0.66274 0.66318 44 u
EURGBP 0.77319 0.77361 42 d
EURCHF 1.09552 1.09608 56 d
EURJPY 124.806 124.850 44 d
GBPJPY 161.362 161.436 74 d
GBPCHF 1.41647 1.41714 67 u
USDCAD 1.32606 1.32647 41 u
EURUSDs 1.09812 1.09843 31 d minor
GBPUSDs 1.41984 1.42018 34 d minor
USDCHFs 0.99754 0.99793 39 d minor
USDJPYs 113.648 113.677 29 u minor
AUDUSDs 0.74693 0.74723 30 d minor
NZDUSDs 0.66279 0.66311 32 u minor
EURGBPs 0.77328 0.77356 28 d minor
EURCHFs 1.09572 1.09603 31 u minor`;
document.getElementById('quotes').innerHTML = quotes.split('\n').map(line => {
  const [name, sell, buy, spread, dir, kind = ''] = line.split(' ');
  const tone = dir === 'u' ? 'up-num' : 'down-num';
  const num = v => `<td class="text-end"><span class="${tone}">${v}</span></td>`;
  return `<tr class="${kind}"><td><svg><use href="#i-${dir === 'u' ? 'up' : 'down'}"/></svg> <span class="${kind ? '' : 'faint'}">${name}</span></td>${num(sell)}${num(buy)}${num(spread)}</tr>`;
}).join('');

const orders = [
  ['6112990','23:18:34','0.01','35.21','-0.15','-3.77','44.10'],
  ['6112994','23:20:43','0.50','35.21','-7.50','-189.67','2 205.00'],
  ['6113000','23:21:57','0.50','35.20','-7.50','-189.67','2 210.00'],
  ['6113002','23:22:27','0.50','35.20','-7.50','-189.67','2 210.00'],
  ['6113004','23:22:41','0.50','35.20','-7.50','-189.67','2 210.00']];
document.getElementById('orders').innerHTML = orders.map(([id, t, lots, open, fee, swap, gain]) =>
  `<tr class="text-end"><td class="text-start"><svg><use href="#i-doc"/></svg>${id}</td>` +
  [`2016.03.01 ${t}`, 'buy', lots, 'oilusd', open, '0.00', '0.00', '39.62', fee, swap].map(v => `<td>${v}</td>`).join('') +
  `<td class="pe-2">${gain} <svg class="kill"><use href="#i-x"/></svg></td></tr>`).join('');

const specs = [['点差','浮动'],['小数点位','2'],['止损位','4'],['每手合约大小','1000'],['预付款货币','USD'],['损益计算模式','期货'],['报价值','10.00'],['报价量','0.01'],['预付款计算模式','期货'],['起始预付款','1500.00'],['维持预付款','1500.00'],['锁仓预付款','750.00'],['预付款百分比','100.0%'],['交易','完全访问'],['执行','即时'],['GTC模式','挂单为有效直至取消'],['最小交易量','0.01'],['最大交易量','1000.00'],['交易量步长','0.01'],['调期库存费计算模式','USD'],['买单调期库存费','-8.41'],['卖单调期库存费','-6.34'],['3-日库存费','星期三']];
const sessions = [['星期日','',''],['星期一','03:00-24:00','03:00-24:00'],['星期二','03:00-24:00','03:00-24:00']];
const han = s => /[\u4e00-\u9fff]/.test(s) ? 'han' : '';
document.getElementById('specs').innerHTML =
  specs.map(([k, v]) => `<tr><td class="han">${k}</td><td colspan="2" class="text-end ${han(v)}">${v}</td></tr>`).join('') +
  '<tr class="fw-bold"><td class="han">期间</td><td class="han">报价</td><td class="han">交易</td></tr>' +
  sessions.map(r => `<tr>${r.map(v => `<td class="${han(v)}">${v}</td>`).join('')}</tr>`).join('');

/* candle: kind, body top, body bottom, wick top, wick bottom */
const candles = [['c',277,295],['g',294],['r',225,295,0,312],['g',208,0,208,226],['c',190,209],['c',190,209],['g',190],['g',208],['c',208,226],['g',208],['g',190],['g',208],['r',190,209,0,226],['g',173],['c',139,157,121],['c',156,191],['c',190,209],['c',225,260],['g',259,0,259,278],['g',277,0,277,295],['r',242,260,0,278],['c',225,243],['g',225,0,208,225],['g',242],['c',225,243],['r',225,243,0,260],['c',208,243],['g',225],['g',242],['c',225,243],['c',225,243],['g',242],['g',242],['r',242,260],['g',259]];
let plot = '<g shape-rendering="crispEdges"><line x2="100%" y1="70.500" y2="70.500" stroke="#c8101c"/><line x2="100%" y1="139.500" y2="139.500" stroke="#83868c"/>';
candles.forEach(([kind, top, bottom, wickTop, wickBottom], i) => {
  const x = i * 8, left = Math.max(x - 2, 0);
  if (kind === 'c') plot += `<path d="M${left} ${top}H${x + 3}V${bottom}H${left}z" fill="#04ccd4"/>` + (wickTop ? `<path d="M${x + .5} ${wickTop}V${top}" stroke="#04ccd4"/>` : '');
  if (kind === 'r') plot += `<path d="M${x - 1.5} ${top + .5}h4V${bottom - .5}h-4z" fill="none" stroke="#f01010"/>` + (wickBottom ? `<path d="M${x + .5} ${bottom}V${wickBottom}" stroke="#f01010"/>` : '');
  if (kind === 'g') plot += `<path d="M${x - 2} ${top + .5}h5" stroke="#10f010"/>` + (wickTop ? `<path d="M${x + .5} ${wickTop}V${wickBottom}" stroke="#10f010"/>` : '');
});
plot += '</g><path d="M3 6h8l-4 4z" fill="#fff"/><text x="15" y="11" fill="#fff">OILUSD,M1&#160; 39.62 39.62 39.62 39.62</text>';
plot += '<svg x="100%" overflow="visible"><path d="M34 65h4v11h-4z" fill="#a82a10"/><path d="M34 134h4v11h-4z" fill="#b0b0b0"/></svg>';
document.getElementById('plot').innerHTML = plot;

let bars = '';
for (let i = 0; i < 8; i++) bars += `<path d="M${i * 3} 0h2v${10 - i}h-2z" fill="#6f8a10"/><path d="M${i * 3} ${11 - i}h2V14h-2z" fill="#12496c"/>`;
document.getElementById('signal').innerHTML = bars;
</script>
<script src="https://cdn.jsdelivr.net/npm/bootstrap@5.3.0/dist/js/bootstrap.bundle.min.js"></script>
</body>
</html>
